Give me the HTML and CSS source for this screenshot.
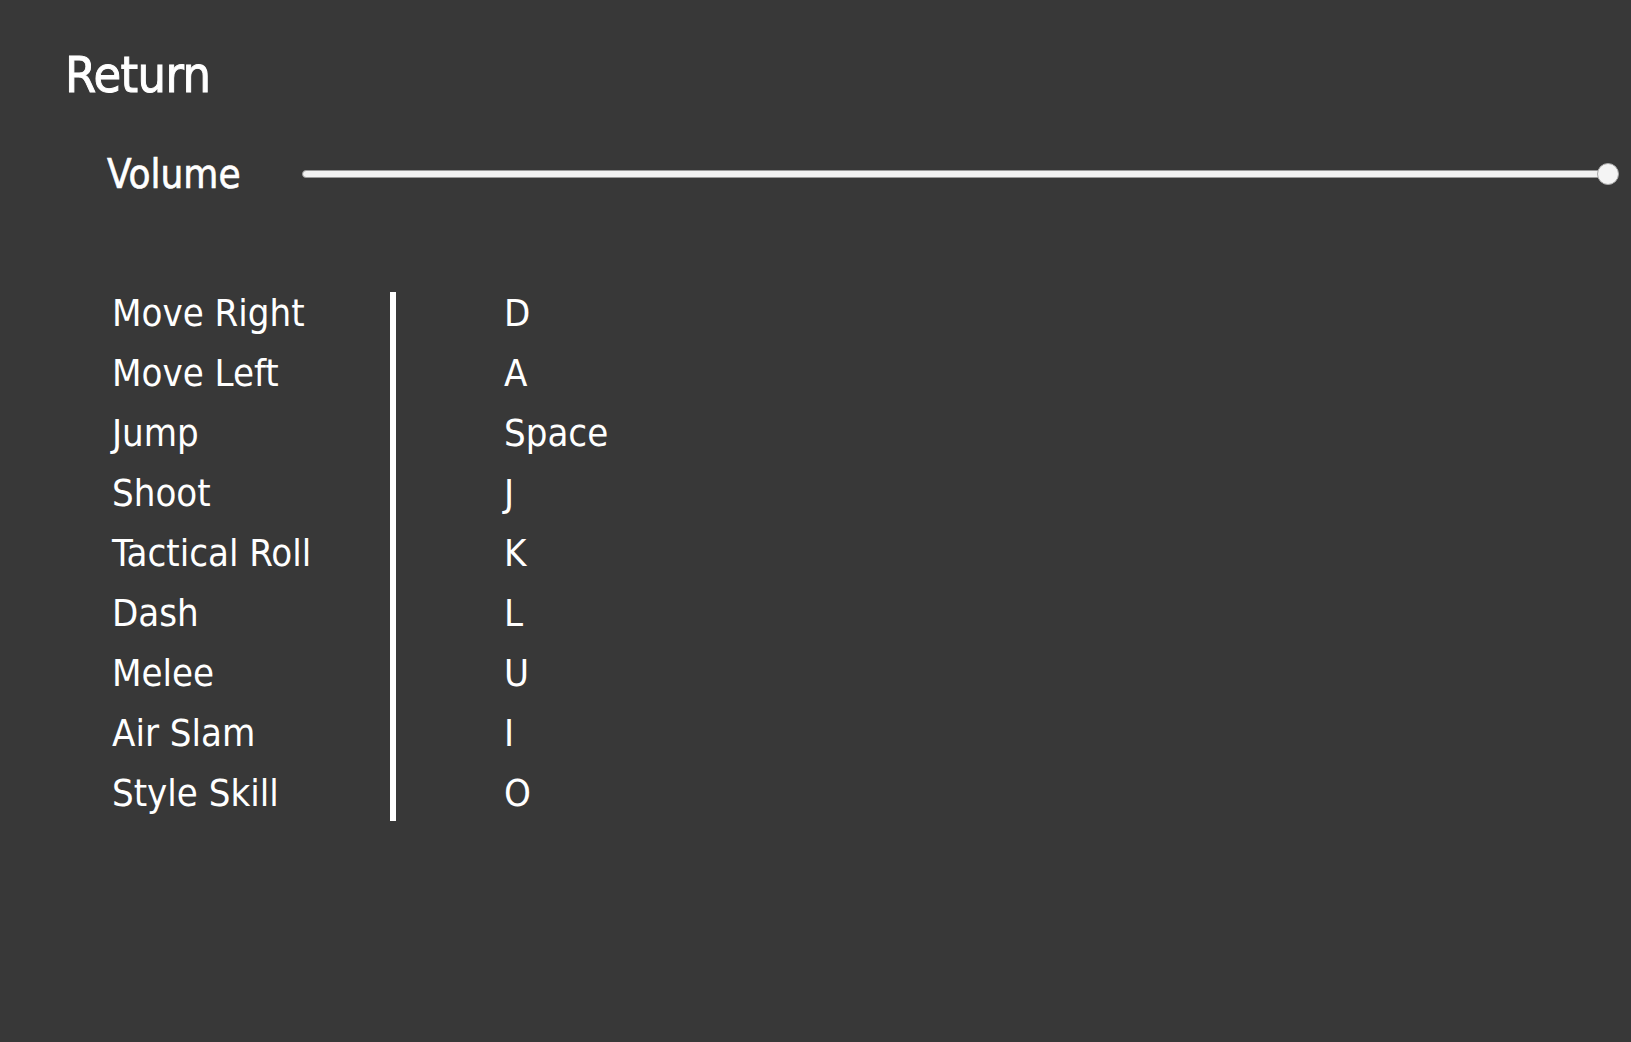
FILE: index.html
```html
<!DOCTYPE html>
<html>
<head>
<meta charset="utf-8">
<link rel="stylesheet" href="styles.css">
</head>
<body>
<div class="page">
  <h1 class="title">Return</h1>
  <div class="volume-row">
    <div class="volume-label">Volume</div>
    <div class="slider">
      <div class="track"></div>
      <div class="thumb"></div>
    </div>
  </div>
  <div class="bindings">
    <div class="labels">
      <div class="row">Move Right</div>
      <div class="row">Move Left</div>
      <div class="row">Jump</div>
      <div class="row">Shoot</div>
      <div class="row">Tactical Roll</div>
      <div class="row">Dash</div>
      <div class="row">Melee</div>
      <div class="row">Air Slam</div>
      <div class="row">Style Skill</div>
    </div>
    <div class="divider"></div>
    <div class="keys">
      <div class="row">D</div>
      <div class="row">A</div>
      <div class="row">Space</div>
      <div class="row">J</div>
      <div class="row">K</div>
      <div class="row">L</div>
      <div class="row">U</div>
      <div class="row">I</div>
      <div class="row">O</div>
    </div>
  </div>
</div>
</body>
</html>
```
FILE: styles.css
```css
html, body {
  margin: 0;
  padding: 0;
  background: #383838;
  height: 100%;
}
.page {
  font-family: "DejaVu Sans Condensed", "DejaVu Sans", sans-serif;
  font-stretch: condensed;
  color: #ffffff;
}
.title {
  margin: 0;
  padding: 49px 0 0 65px;
  font-size: 50px;
  line-height: 52px;
  font-weight: normal;
  letter-spacing: -0.6px;
  -webkit-text-stroke: 0.9px #ffffff;
}
.volume-row {
  display: flex;
  align-items: center;
  margin-top: 53px;
  height: 40px;
  padding-left: 107px;
  padding-right: 12px;
}
.volume-label {
  width: 195px;
  font-size: 40px;
  line-height: 40px;
  -webkit-text-stroke: 0.6px #ffffff;
}
.slider {
  flex: 1;
  display: flex;
  align-items: center;
  height: 22px;
}
.track {
  flex: 1;
  height: 6px;
  background: #f2f2f2;
  border: 1px solid #9a9a9a;
  border-radius: 4px;
}
.thumb {
  width: 20px;
  height: 20px;
  margin-left: -12px;
  border-radius: 50%;
  background: #f4f4f4;
  border: 1px solid #a8a8a8;
}
.bindings {
  display: flex;
  margin-top: 89px;
  margin-left: 112px;
}
.labels {
  width: 278px;
}
.divider {
  width: 6px;
  background: #ffffff;
  margin: 9px 0 2px 0;
}
.keys {
  padding-left: 108px;
}
.row {
  font-size: 38px;
  line-height: 60px;
  height: 60px;
  white-space: nowrap;
}
```
